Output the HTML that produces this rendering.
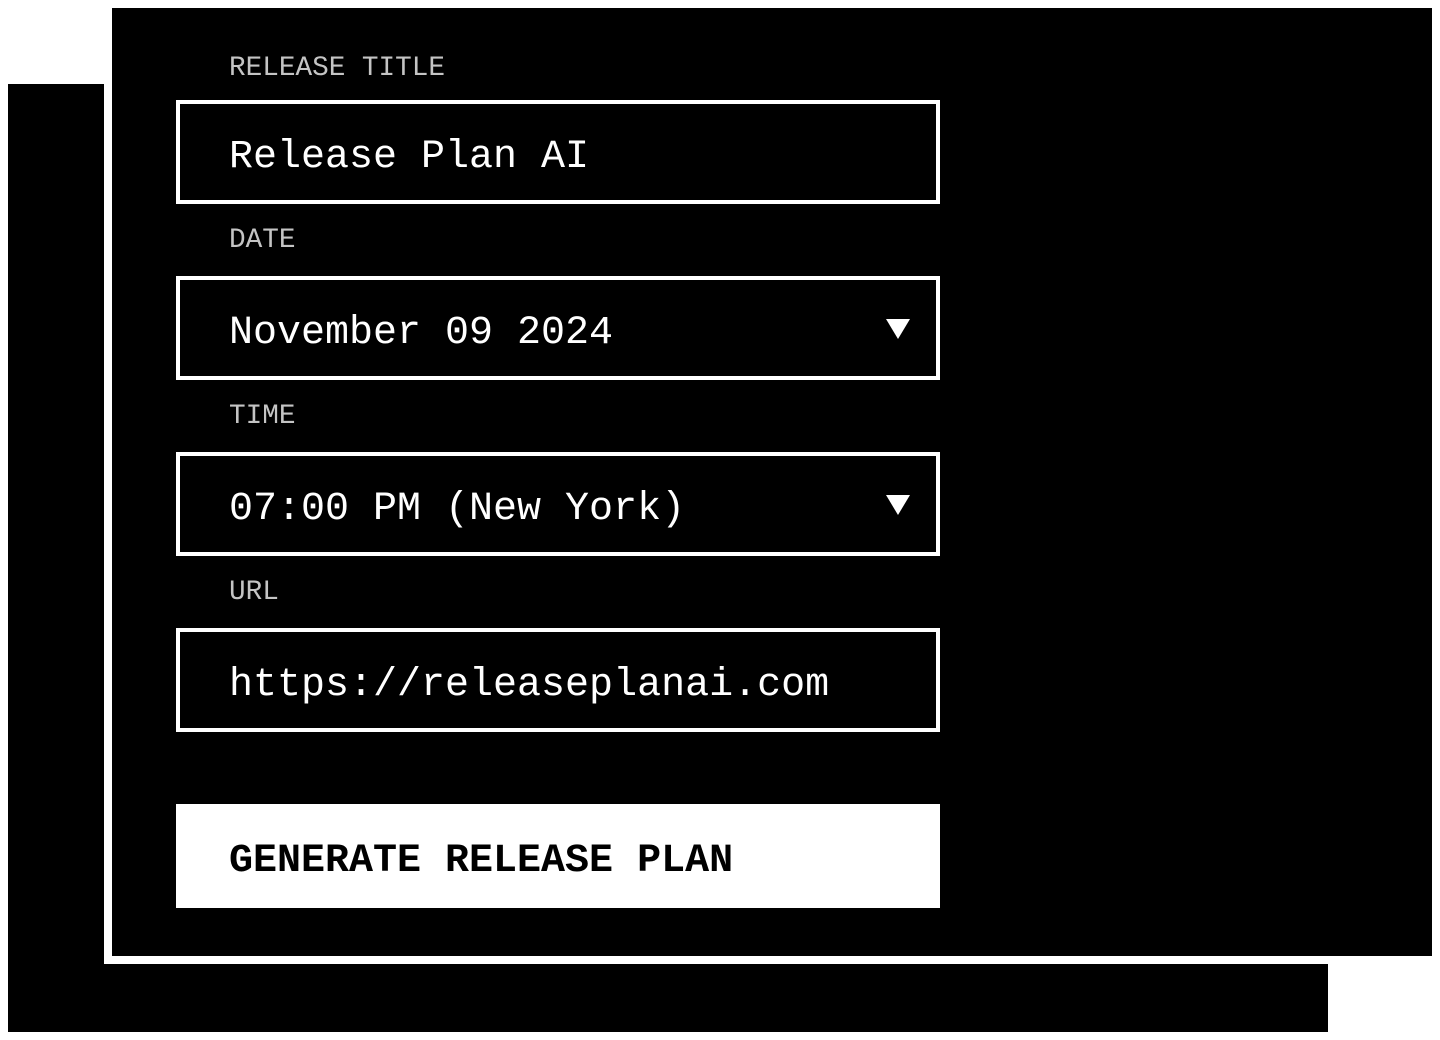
<!DOCTYPE html>
<html><head><meta charset="utf-8"><style>
html,body{margin:0;padding:0;background:#fff;width:1440px;height:1040px;overflow:hidden;position:relative;font-family:"Liberation Mono",monospace}
.back{position:absolute;left:8px;top:84px;width:1320px;height:948px;background:#000}
.front{position:absolute;left:104px;top:0px;width:1320px;height:948px;background:#000;border:8px solid #fff;border-left-width:8px}
.lbl{position:absolute;left:229px;font-size:27.7px;color:#c4c4c4;line-height:28px;height:28px}
.box{position:absolute;left:176px;width:756px;height:96px;border:4px solid #fff;display:flex;align-items:center;color:#fff;font-size:40px;box-sizing:content-box}
.box span{margin-left:49px;margin-top:10px}
.arr{position:absolute;right:26px;top:39px;width:0;height:0;border-left:12px solid transparent;border-right:12px solid transparent;border-top:20px solid #fff}
.btn{position:absolute;left:176px;top:804px;width:764px;height:104px;background:#fff;color:#000;font-weight:bold;font-size:40px;display:flex;align-items:center}
.btn span{margin-left:53px;margin-top:10px}
</style></head><body>
<div class="back"></div>
<div class="front"></div>
<div class="lbl" style="top:55px">RELEASE TITLE</div>
<div class="box" style="top:100px"><span>Release Plan AI</span></div>
<div class="lbl" style="top:227px">DATE</div>
<div class="box" style="top:276px"><span>November 09 2024</span><div class="arr"></div></div>
<div class="lbl" style="top:403px">TIME</div>
<div class="box" style="top:452px"><span>07:00 PM (New York)</span><div class="arr"></div></div>
<div class="lbl" style="top:579px">URL</div>
<div class="box" style="top:628px"><span>https://releaseplanai.com</span></div>
<div class="btn"><span>GENERATE RELEASE PLAN</span></div>
</body></html>
